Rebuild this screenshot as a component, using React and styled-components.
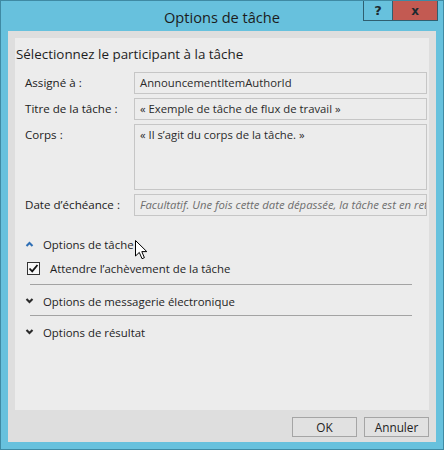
import React from "react";
import styled, { createGlobalStyle } from "styled-components";

const Global = createGlobalStyle`
  html, body { margin: 0; padding: 0; background: #67c1dd; }
  body { font-family: "Open Sans", "Noto Sans", sans-serif; }
  * { box-sizing: border-box; }
`;

const Window = styled.div`
  width: 444px;
  height: 450px;
  background: #67c1dd;
  border: 1px solid #3f8aa3;
  display: flex;
  flex-direction: column;
  overflow: hidden;
`;

const TitleBar = styled.div`
  height: 30px;
  display: grid;
  grid-template-columns: 1fr auto 1fr;
  align-items: center;
`;

const Title = styled.div`
  grid-column: 2;
  font-size: 14.6px;
  color: #1c1c1c;
  padding-top: 1px;
`;

const Controls = styled.div`
  grid-column: 3;
  justify-self: end;
  align-self: start;
  display: flex;
  margin-top: -1px;
  margin-right: 5px;
`;

const CtrlButton = styled.div`
  width: ${(p) => p.$w}px;
  height: 21px;
  background: ${(p) => p.$bg};
  border: 1px solid #2f5f70;
  margin-left: -1px;
  display: flex;
  align-items: center;
  justify-content: center;
  font-family: "DejaVu Sans", sans-serif;
  font-weight: bold;
  font-size: ${(p) => p.$fs}px;
  color: #1d2a30;
`;

const Frame = styled.div`
  flex: 1;
  margin: 0 7px 7px 7px;
  background: #dedede;
  padding: 7px 7px 5px 7px;
  display: flex;
  flex-direction: column;
`;

const Panel = styled.div`
  position: relative;
  flex: 1;
  background: #ececec;
  padding: 6px 2px 0 1px;
`;

const Heading = styled.div`
  font-size: 13.4px;
  line-height: 20px;
  color: #1e1e1e;
`;

const Fields = styled.div`
  margin-top: 8px;
  padding-left: 9px;
  display: grid;
  grid-template-columns: 109px 1fr;
  row-gap: 4px;
`;

const Label = styled.div`
  font-size: 11.6px;
  color: #222;
  line-height: 18px;
  padding-top: 2px;
`;

const Box = styled.div`
  height: ${(p) => p.$h || 22}px;
  border: 1px solid #c6c6c6;
  background: #ececec;
  padding: 1px 5px;
  font-size: 11.3px;
  line-height: 18px;
  color: ${(p) => (p.$placeholder ? "#6e6e6e" : "#2a2a2a")};
  font-style: ${(p) => (p.$placeholder ? "italic" : "normal")};
  white-space: nowrap;
  overflow: hidden;
`;

const Sections = styled.div`
  margin-top: 18px;
  padding-left: 9px;
  display: flex;
  flex-direction: column;
`;

const SectionHeader = styled.div`
  height: 20px;
  display: flex;
  align-items: center;
  font-size: 11.4px;
  color: #1e1e1e;
`;

const ChevronSlot = styled.span`
  width: 18px;
  display: flex;
  align-items: center;
`;

const CheckRow = styled.div`
  margin-top: 4px;
  height: 20px;
  display: flex;
  align-items: center;
  padding-left: 2px;
  gap: 10px;
  font-size: 11.4px;
  color: #1e1e1e;
`;

const CheckBox = styled.span`
  width: 13px;
  height: 13px;
  border: 1px solid #333;
  background: #f6f6f6;
  display: flex;
  align-items: center;
  justify-content: center;
`;

const Separator = styled.div`
  height: 1px;
  background: #a3a3a3;
  margin: ${(p) => p.$mt}px 15px ${(p) => p.$mb}px 5px;
`;

const Footer = styled.div`
  display: flex;
  justify-content: flex-end;
  gap: 7px;
  padding-top: 7px;
`;

const Button = styled.div`
  width: 65px;
  height: 20px;
  border: 1px solid #a5a5a5;
  background: #e1e1e1;
  font-size: 11.8px;
  color: #222;
  display: flex;
  align-items: center;
  justify-content: center;
`;

const Cursor = styled.svg`
  position: absolute;
  left: 120px;
  top: 202px;
`;

const ChevronUp = () => (
  <svg width="9" height="6" viewBox="0 0 9 6">
    <path d="M1.5 5 L4.5 2 L7.5 5" fill="none" stroke="#2f6fb5" strokeWidth="2.1" />
  </svg>
);

const ChevronDown = () => (
  <svg width="9" height="6" viewBox="0 0 9 6">
    <path d="M1.5 1 L4.5 4 L7.5 1" fill="none" stroke="#2b2b2b" strokeWidth="2.1" />
  </svg>
);

export default function App() {
  return (
    <>
      <Global />
      <Window>
        <TitleBar>
          <Title>Options de tâche</Title>
          <Controls>
            <CtrlButton $w={30} $bg="#67c1dd" $fs={13}>?</CtrlButton>
            <CtrlButton $w={46} $bg="#c35a52" $fs={12}>x</CtrlButton>
          </Controls>
        </TitleBar>
        <Frame>
          <Panel>
            <Heading>Sélectionnez le participant à la tâche</Heading>
            <Fields>
              <Label>Assigné à :</Label>
              <Box>AnnouncementItemAuthorId</Box>
              <Label>Titre de la tâche :</Label>
              <Box>« Exemple de tâche de flux de travail »</Box>
              <Label>Corps :</Label>
              <Box $h={66}>« Il s’agit du corps de la tâche. »</Box>
              <Label>Date d’échéance :</Label>
              <Box $placeholder>Facultatif. Une fois cette date dépassée, la tâche est en retard.</Box>
            </Fields>
            <Sections>
              <SectionHeader>
                <ChevronSlot><ChevronUp /></ChevronSlot>
                Options de tâche
              </SectionHeader>
              <CheckRow>
                <CheckBox>
                  <svg width="11" height="11" viewBox="0 0 11 11">
                    <path d="M1.5 5.5 L4.2 8.3 L9.5 2" fill="none" stroke="#111" strokeWidth="1.8" />
                  </svg>
                </CheckBox>
                Attendre l’achèvement de la tâche
              </CheckRow>
              <Separator $mt={6} $mb={6} />
              <SectionHeader>
                <ChevronSlot><ChevronDown /></ChevronSlot>
                Options de messagerie électronique
              </SectionHeader>
              <Separator $mt={4} $mb={6} />
              <SectionHeader>
                <ChevronSlot><ChevronDown /></ChevronSlot>
                Options de résultat
              </SectionHeader>
            </Sections>
            <Cursor width="13" height="20" viewBox="0 0 13 20">
              <path d="M0.5 0.5 L0.5 16 L4.3 12.4 L7 18.7 L9.4 17.7 L6.8 11.6 L11.8 11.6 Z" fill="#fff" stroke="#000" strokeWidth="1" strokeLinejoin="miter" />
            </Cursor>
          </Panel>
          <Footer>
            <Button>OK</Button>
            <Button>Annuler</Button>
          </Footer>
        </Frame>
      </Window>
    </>
  );
}
